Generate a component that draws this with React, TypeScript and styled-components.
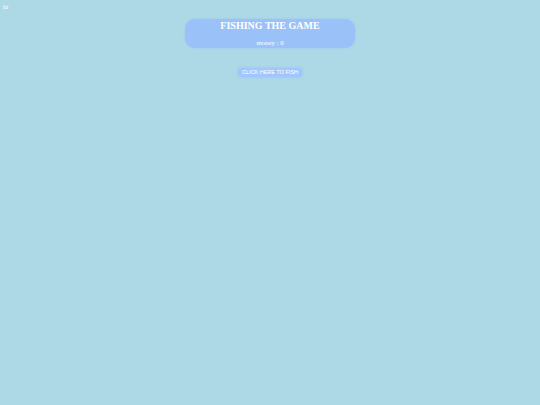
import React, { useState } from "react";
import styled, { createGlobalStyle } from "styled-components";

const GlobalStyle = createGlobalStyle`
  html, body {
    margin: 0;
    padding: 0;
    background: #add8e6;
    min-height: 100%;
  }
  body {
    font-family: "Liberation Serif", "Times New Roman", serif;
    color: #ffffff;
  }
`;

const Page = styled.div`
  min-height: 405px;
  padding: 3px 3px;
  box-sizing: border-box;
`;

const Greeting = styled.div`
  font-size: 7px;
  line-height: 8px;
  color: #ffffff;
`;

const Card = styled.div`
  width: 170px;
  height: 29px;
  margin: 8px auto 0;
  box-sizing: border-box;
  padding-top: 1px;
  background: #9ac2f8;
  border-radius: 10px;
  box-shadow: 0 0 2px rgba(150, 190, 250, 0.8);
  display: flex;
  flex-direction: column;
  align-items: center;
`;

const Title = styled.h1`
  margin: 0;
  font-size: 10px;
  line-height: 12px;
  font-weight: bold;
  color: #ffffff;
`;

const Money = styled.p`
  margin: 7px 0 0;
  font-size: 6.8px;
  line-height: 8px;
  color: #ffffff;
`;

const Actions = styled.div`
  display: flex;
  justify-content: center;
  margin-top: 20px;
`;

const FishButton = styled.button`
  font-family: "Liberation Sans", Arial, sans-serif;
  font-size: 5.5px;
  line-height: 7px;
  color: #ffffff;
  background: #a2c6fb;
  border: none;
  border-radius: 4px;
  padding: 1px 3.5px;
  box-shadow: 0 0 3px rgba(150, 190, 255, 0.9);
  cursor: pointer;
`;

export default function App() {
  const [money, setMoney] = useState(0);

  return (
    <>
      <GlobalStyle />
      <Page>
        <Greeting>hi</Greeting>
        <Card>
          <Title>FISHING THE GAME</Title>
          <Money>money : {money}</Money>
        </Card>
        <Actions>
          <FishButton onClick={() => setMoney((m) => m + 1)}>
            CLICK HERE TO FISH
          </FishButton>
        </Actions>
      </Page>
    </>
  );
}
